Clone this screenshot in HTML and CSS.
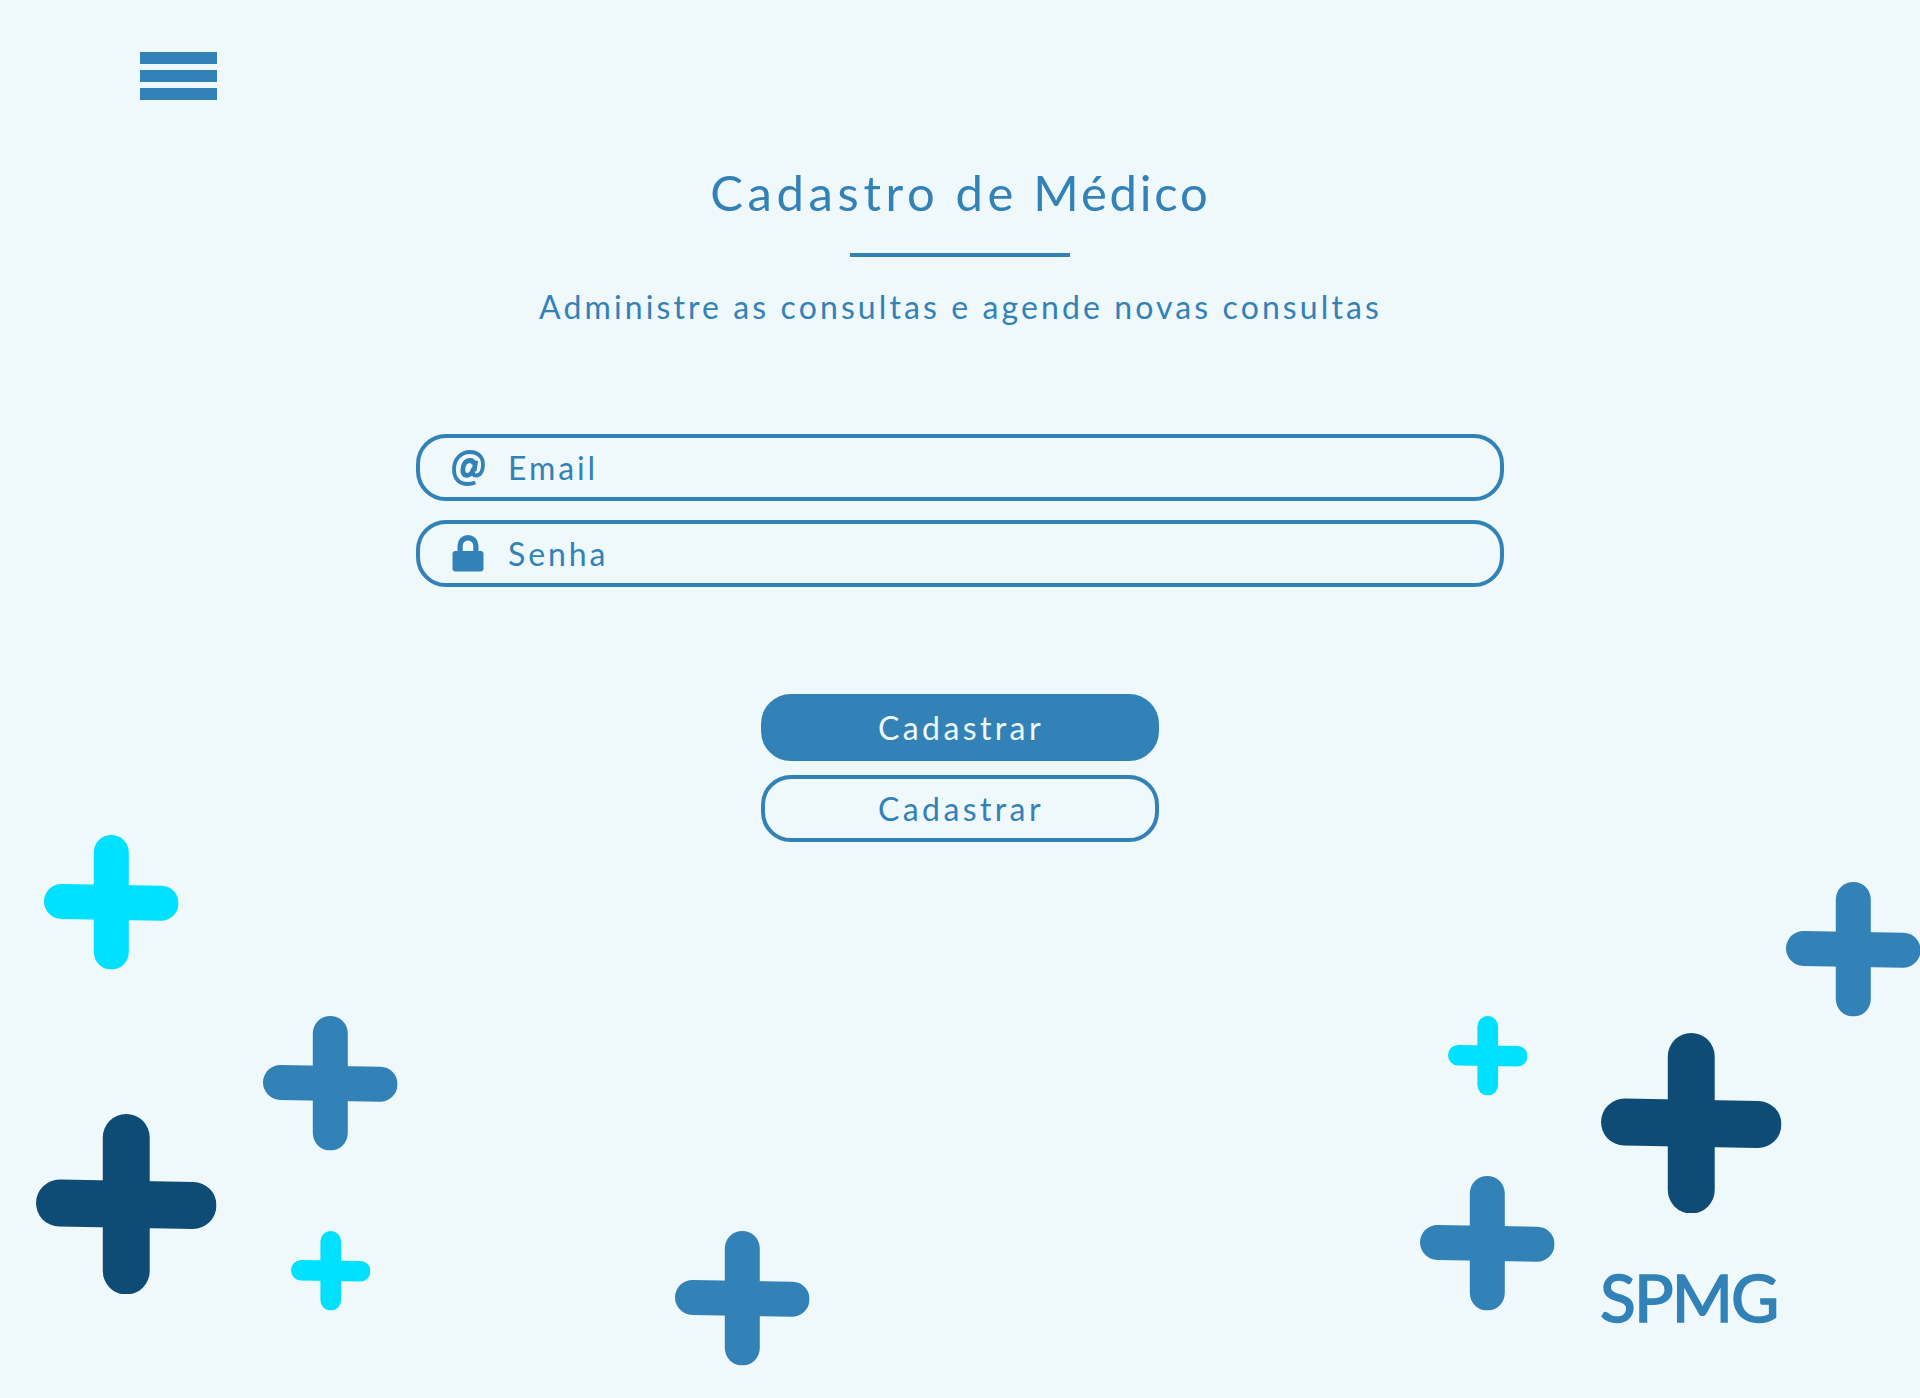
FILE: index.html
```html
<!DOCTYPE html>
<html lang="pt-BR">
<head>
<meta charset="utf-8">
<title>Cadastro de Médico</title>
<link rel="stylesheet" href="styles.css">
</head>
<body>
<svg class="sprite" aria-hidden="true">
  <symbol id="plus" viewBox="0 0 100 100">
    <rect x="37" y="0" width="26" height="100" rx="13"/>
    <rect x="0" y="37" width="100" height="26" rx="13" transform="rotate(1 50 50)"/>
  </symbol>
</svg>
<div class="page">
  <header class="topbar">
    <button class="menu" aria-label="Menu"><span></span><span></span><span></span></button>
  </header>
  <main class="content">
    <h1 class="title"><span class="wide">Cadastro de</span> Médico</h1>
    <div class="rule"></div>
    <p class="subtitle">Administre as consultas e agende novas consultas</p>
    <form class="form">
      <label class="field">
        <svg class="at" viewBox="0 0 34 37"><path class="ring" d="M23.300 32.500C21 33.500 18.500 34 15.500 34C7 34 2 28.500 2 19.500C2 9.500 8.500 2 18 2C26 2 31 7 31 14.500C31 21.500 28 25.500 24 25.500C21.500 25.500 20.800 24 21.200 21.500"/><path class="bowl" d="M22 21L23.800 10.500M22 14C21.500 11.500 20 10.500 17.800 10.500C13.800 10.500 10.800 14.500 10.800 20C10.800 23.500 12.300 25.300 14.800 25.300C18 25.300 20.500 22.500 21.500 18.500"/></svg>
        <input class="email" type="email" placeholder="Email">
      </label>
      <label class="field">
        <svg class="lock" viewBox="0 0 32 37"><path fill-rule="evenodd" d="M5.500 16V10.500a10.500 10.500 0 0 1 21 0V16H28.500a3 3 0 0 1 3 3V33.500a3 3 0 0 1-3 3H3.500a3 3 0 0 1-3-3V19a3 3 0 0 1 3-3ZM10.700 16H21.300V10.700a5.300 5.300 0 0 0-10.600 0Z"/></svg>
        <input class="senha" type="password" placeholder="Senha">
      </label>
      <div class="actions">
        <button class="btn filled" type="button">Cadastrar</button>
        <button class="btn" type="button">Cadastrar</button>
      </div>
    </form>
  </main>
  <svg class="plus p1 medium cyan"><use href="#plus"/></svg>
  <svg class="plus p2 medium"><use href="#plus"/></svg>
  <svg class="plus p3 large"><use href="#plus"/></svg>
  <svg class="plus p4 small cyan"><use href="#plus"/></svg>
  <svg class="plus p5 medium"><use href="#plus"/></svg>
  <svg class="plus p6 small cyan"><use href="#plus"/></svg>
  <svg class="plus p7 medium"><use href="#plus"/></svg>
  <svg class="plus p8 large"><use href="#plus"/></svg>
  <svg class="plus p9 medium"><use href="#plus"/></svg>
  <div class="logo">SPMG</div>
</div>
</body>
</html>
```
FILE: styles.css
```css
:root {
  --blue: #3282b8;
  --navy: #0f4c75;
  --cyan: #00e1ff;
  --bg: #eff8fb;
}
* { box-sizing: border-box; }
body { margin: 0; background: var(--bg); color: var(--blue); font-family: Lato, sans-serif; }
.sprite { position: absolute; width: 0; height: 0; }
.page { position: relative; height: 1398px; overflow: hidden; }
.topbar { padding: 52px 140px 0; height: 100px; }
.menu { display: flex; flex-direction: column; gap: 6px; width: 77px; padding: 0; border: 0; background: none; }
.menu span { height: 12px; background: var(--blue); }
.content { display: flex; flex-direction: column; align-items: center; padding-top: 62px; }
.title { margin: 0; padding-left: 1px; font-size: 49px; font-weight: 400; line-height: 60px; letter-spacing: 2.8px; white-space: nowrap; }
.title .wide { letter-spacing: 4.6px; word-spacing: -1px; }
.rule { width: 220px; height: 4px; margin-top: 31px; background: var(--blue); }
.subtitle { margin: 30px 0 0; padding-left: 1px; font-size: 32px; line-height: 40px; letter-spacing: 3.1px; white-space: nowrap; }
.form { display: flex; flex-direction: column; align-items: center; gap: 19px; margin-top: 107px; }
.field { display: flex; align-items: center; width: 1088px; height: 67px; padding-left: 32px; border: 4px solid var(--blue); border-radius: 30px; }
.at { width: 34px; height: 37px; margin-top: 2px; fill: none; stroke: var(--blue); }
.ring { stroke-width: 3.8; }
.bowl { stroke-width: 4.8; }
.lock { width: 32px; height: 37px; margin-right: 2px; fill: var(--blue); }
input { flex: 1; margin-left: 22px; padding: 0; border: 0; outline: 0; background: none; font: 32px/40px Lato, sans-serif; letter-spacing: 2.9px; color: var(--blue); }
input::placeholder { color: var(--blue); opacity: 1; }
.actions { display: flex; flex-direction: column; gap: 14px; margin-top: 88px; }
.btn { width: 398px; height: 67px; padding: 0 0 0 2px; border: 4px solid var(--blue); border-radius: 30px; background: none; color: var(--blue); font: 32px/40px Lato, sans-serif; letter-spacing: 3.4px; }
.filled { background: var(--blue); color: var(--bg); }
.plus { position: absolute; fill: var(--blue); }
.small { width: 79.5px; height: 79.5px; }
.medium { width: 134.6px; height: 134.6px; }
.large { width: 180.5px; height: 180.5px; fill: var(--navy); }
.cyan { fill: var(--cyan); }
.p1 { left: 44px; top: 835.2px; }
.p2 { left: 263.4px; top: 1016.2px; }
.p3 { left: 36.2px; top: 1113.8px; }
.p4 { left: 290.9px; top: 1231.2px; }
.p5 { left: 675px; top: 1231.2px; }
.p6 { left: 1447.7px; top: 1016.2px; }
.p7 { left: 1785.5px; top: 882.2px; }
.p8 { left: 1601px; top: 1032.8px; }
.p9 { left: 1420.1px; top: 1176.2px; }
.logo { position: absolute; left: 1600px; top: 1257px; font-size: 66px; line-height: 80px; letter-spacing: -1.9px; white-space: nowrap; -webkit-text-stroke: 1.6px var(--blue); }
```
